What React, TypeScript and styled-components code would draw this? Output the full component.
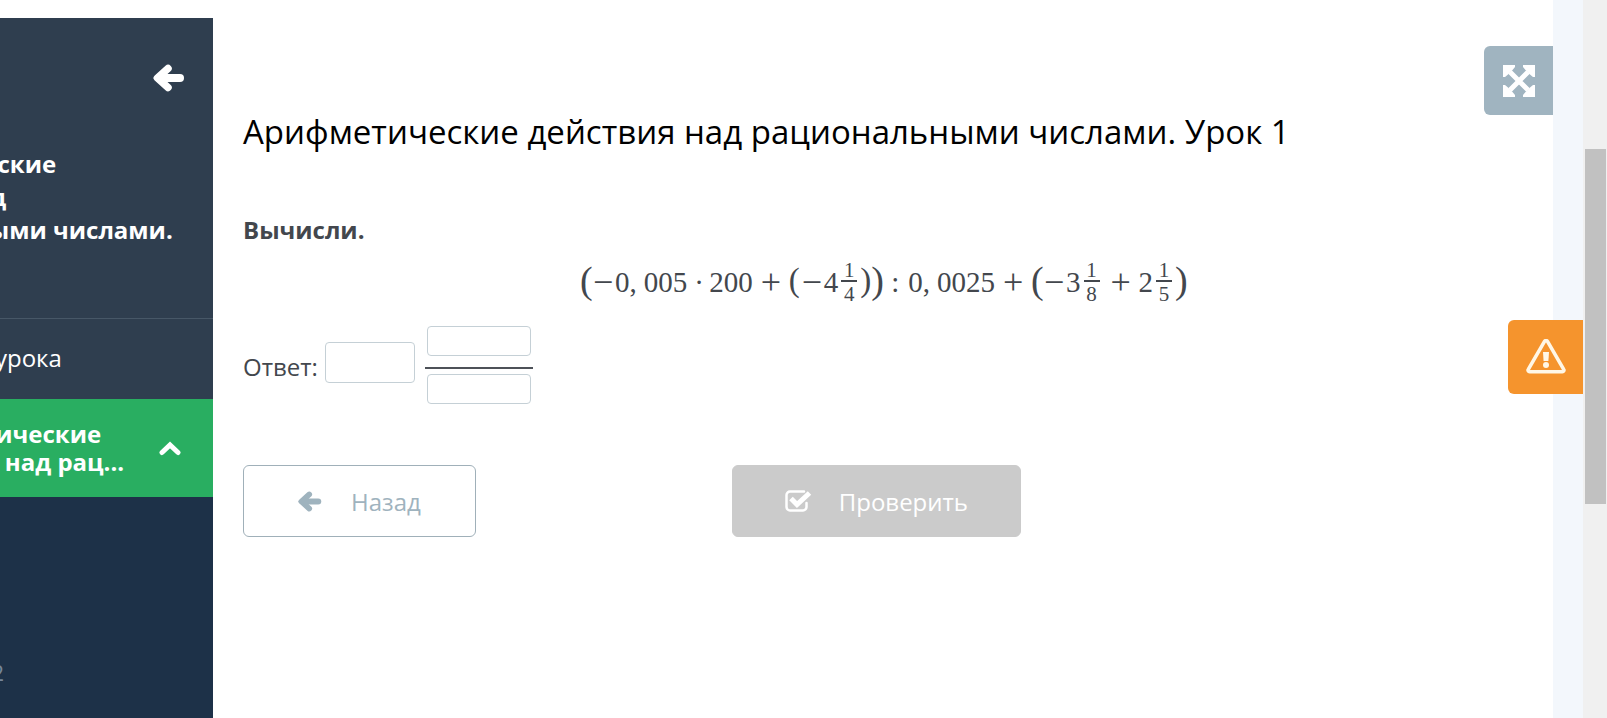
import React from "react";
import styled, { createGlobalStyle } from "styled-components";

const GlobalStyle = createGlobalStyle`
  *, *::before, *::after { box-sizing: border-box; }
  body {
    margin: 0;
    background: #fff;
    color: #43474d;
    font-family: "Open Sans", "Noto Sans", sans-serif;
    font-size: 24px;
  }
  button, input { font: inherit; }
`;

const Page = styled.div`
  position: relative;
  display: flex;
  min-height: 100vh;
  overflow: hidden;
`;

const Sidebar = styled.aside`
  flex: none;
  display: flex;
  justify-content: flex-end;
  width: 213px;
  margin-top: 18px;
  overflow: hidden;
  background: #1d3148;
  color: #fff;
`;

const SidebarInner = styled.div`
  flex: none;
  display: flex;
  flex-direction: column;
  width: 379px;
`;

const SidebarHead = styled.div`
  display: flex;
  flex-direction: column;
  align-items: flex-start;
  height: 301px;
  padding: 46px 28px 0 0;
  background: #2f3e4f;
  border-bottom: 1px solid #475767;
`;

const IconButton = styled.button`
  align-self: flex-end;
  display: flex;
  padding: 0;
  border: 0;
  background: none;
  color: inherit;
`;

const CourseTitle = styled.h2`
  margin: 55px 0 0;
  font-size: 24px;
  line-height: 33px;
  font-weight: 700;
  white-space: nowrap;
`;

const PlanLink = styled.a`
  display: flex;
  align-items: center;
  height: 80px;
  padding: 0 0 4px 95px;
  background: #2f3e4f;
  color: #fff;
  text-decoration: none;
`;

const CurrentLesson = styled.button`
  display: flex;
  align-items: center;
  justify-content: space-between;
  height: 98px;
  padding: 0 32px 0 45px;
  border: 0;
  background: #29ae61;
  color: #fff;
  font-weight: 700;
  line-height: 28px;
  text-align: left;
`;

const Version = styled.div`
  margin-top: auto;
  padding: 0 209px 30px 0;
  color: #76869a;
  font-size: 22px;
  line-height: 32px;
  text-align: right;
`;

const Main = styled.main`
  flex: 1;
  min-width: 0;
  padding: 110px 30px 0;
`;

const Title = styled.h1`
  margin: 0;
  color: #000;
  font-size: 33px;
  line-height: 44px;
  font-weight: 400;
`;

const Task = styled.p`
  margin: 59px 0 0;
  font-weight: 700;
  line-height: 34px;
`;

const Formula = styled.div`
  display: flex;
  align-items: center;
  justify-content: center;
  height: 48px;
  margin-top: 11px;
  font-family: "Liberation Serif", serif;
  font-size: 29px;
  line-height: 1;
`;

const Comma = styled.span`
  margin-right: 7px;
`;

const Operator = styled.span<{ $gap?: number }>`
  width: 20px;
  margin: 0 ${(p) => p.$gap ?? 8}px;
  font-size: 36px;
  text-align: center;
`;

const Mark = styled.span<{ $gap: number }>`
  width: 8px;
  margin: 0 ${(p) => p.$gap}px;
  text-align: center;
`;

const Paren = styled.span<{ $large?: boolean }>`
  width: 11px;
  padding-bottom: 4px;
  font-size: ${(p) => (p.$large ? 38 : 33)}px;
  text-align: center;
`;

const Fraction = styled.span`
  display: flex;
  flex-direction: column;
  align-items: center;
  width: 16px;
  margin: 0 3px;
  font-size: 21px;
  line-height: 20px;
`;

const Numerator = styled.span`
  width: 100%;
  border-bottom: 2px solid #43474d;
  text-align: center;
`;

const Denominator = styled.span`
  padding-top: 2px;
`;

const AnswerRow = styled.div`
  display: flex;
  align-items: center;
  margin-top: 20px;
`;

const AnswerLabel = styled.label`
  padding-top: 4px;
  line-height: 34px;
`;

const AnswerInput = styled.input<{ $small?: boolean }>`
  display: block;
  width: ${(p) => (p.$small ? 104 : 90)}px;
  height: ${(p) => (p.$small ? 30 : 41)}px;
  padding: 0 8px;
  border: 1px solid #c5d0d6;
  border-radius: 4px;
  background: #fff;
  color: inherit;
`;

const WholeSlot = styled.div`
  margin: 0 10px 5px 7px;
`;

const AnswerFraction = styled.div`
  display: flex;
  flex-direction: column;
  align-items: center;
  width: 108px;
`;

const FractionBar = styled.div`
  width: 100%;
  height: 2px;
  margin: 11px 0 5px;
  background: #4d5158;
`;

const Actions = styled.div`
  display: flex;
  column-gap: 20%;
  margin-top: 61px;
`;

const ActionButton = styled.button<{ $filled?: boolean }>`
  display: flex;
  align-items: center;
  height: 72px;
  padding: 0 ${(p) => (p.$filled ? 52 : 54)}px;
  gap: ${(p) => (p.$filled ? 27 : 29)}px;
  border: 1px solid ${(p) => (p.$filled ? "#cbcbcb" : "#a0b0b9")};
  border-radius: 6px;
  background: ${(p) => (p.$filled ? "#cbcbcb" : "#fff")};
  color: ${(p) => (p.$filled ? "#fff" : "#9fb3be")};
  svg { flex: none; }
`;

const Gutter = styled.div`
  flex: none;
  width: 30px;
  background: #f3f7fc;
`;

const ScrollTrack = styled.div`
  flex: none;
  width: 24px;
  padding: 149px 1px 0 2px;
  background: #f0f0f0;
`;

const ScrollThumb = styled.div`
  height: 355px;
  background: #c1c1c1;
`;

const CornerButton = styled.button<{ $warn?: boolean }>`
  position: absolute;
  top: ${(p) => (p.$warn ? 320 : 46)}px;
  right: ${(p) => (p.$warn ? 24 : 54)}px;
  display: flex;
  align-items: center;
  justify-content: center;
  width: ${(p) => (p.$warn ? 75 : 69)}px;
  height: ${(p) => (p.$warn ? 74 : 69)}px;
  padding: 0;
  border: 0;
  border-radius: 6px 0 0 6px;
  background: ${(p) => (p.$warn ? "#f5942d" : "#a0b4c0")};
  color: #fff;
`;

const ArrowIcon = ({ width }: { width: number }) => (
  <svg width={width} height={Math.round(width * 0.875)} viewBox="0 0 32 28" fill="none" stroke="currentColor" strokeLinecap="round" strokeLinejoin="round" aria-hidden="true">
    <path d="M15 4.500 4.500 14 15 23.500" strokeWidth="7.500" />
    <path d="M6 14h21" strokeWidth="8" />
    <path d="M1.500 14 13 5v18z" fill="currentColor" strokeWidth="2" />
  </svg>
);

const ChevronIcon = () => (
  <svg width="22" height="15" viewBox="0 0 22 15" fill="none" stroke="currentColor" strokeWidth="5" strokeLinejoin="miter" strokeLinecap="round" aria-hidden="true">
    <path d="M3 11.500 11 4l8 7.500" />
  </svg>
);

const CheckIcon = () => (
  <svg width="27" height="22" viewBox="0 0 27 22" fill="none" stroke="currentColor" aria-hidden="true">
    <path d="M19 1.500H5A3.500 3.500 0 0 0 1.500 5v12A3.500 3.500 0 0 0 5 20.500h13a3.500 3.500 0 0 0 3.500-3.500v-4" strokeWidth="2.500" strokeLinecap="round" />
    <path d="m6 8.500 6 6L24.500 3" strokeWidth="5" />
  </svg>
);

const ExpandIcon = () => (
  <svg width="32" height="32" viewBox="0 0 32 32" fill="currentColor" aria-hidden="true">
    <path d="M7 7l18 18M25 7 7 25" stroke="currentColor" strokeWidth="5" />
    <path d="M0 0h12v2L9.500 5 5 9.500 2 12H0zM32 0H20v2l2.500 3L27 9.500l3 2.500h2zM0 32h12v-2l-2.500-3L5 22.500 2 20H0zM32 32H20v-2l2.500-3 4.500-4.500 3-2.500h2z" />
  </svg>
);

const WarningIcon = () => (
  <svg width="40" height="36" viewBox="0 0 40 36" fill="none" aria-hidden="true">
    <path d="M18.500 2.400a1.800 1.800 0 0 1 3 0l16.200 28a1.500 1.500 0 0 1-1.300 2.300H3.600a1.500 1.500 0 0 1-1.300-2.300z" stroke="#fff7e6" strokeWidth="3.600" />
    <path d="M17 13h6l-.6 9h-4.800z" fill="#fff7e6" />
    <circle cx="20" cy="26" r="3" fill="#fff7e6" />
  </svg>
);

const Frac = ({ top, bottom }: { top: number; bottom: number }) => (
  <Fraction>
    <Numerator>{top}</Numerator>
    <Denominator>{bottom}</Denominator>
  </Fraction>
);

export default function App() {
  return (
    <>
      <GlobalStyle />
      <Page>
        <Sidebar>
          <SidebarInner>
            <SidebarHead>
              <IconButton type="button" aria-label="Свернуть меню">
                <ArrowIcon width={32} />
              </IconButton>
              <CourseTitle>
                Арифметические<br />
                действия над<br />
                рациональными числами.
              </CourseTitle>
            </SidebarHead>
            <PlanLink href="#plan">План урока</PlanLink>
            <CurrentLesson type="button">
              <span>
                Арифметические<br />
                действия над рац...
              </span>
              <ChevronIcon />
            </CurrentLesson>
            <Version>2</Version>
          </SidebarInner>
        </Sidebar>
        <Main>
          <Title>Арифметические действия над рациональными числами. Урок 1</Title>
          <Task>Вычисли.</Task>
          <Formula>
            <Paren $large>(</Paren>
            <Operator $gap={2}>−</Operator>
            <span>0</span><Comma>,</Comma><span>005</span>
            <Mark $gap={7}>·</Mark>
            <span>200</span>
            <Operator>+</Operator>
            <Paren>(</Paren>
            <Operator $gap={2}>−</Operator>
            <span>4</span>
            <Frac top={1} bottom={4} />
            <Paren>)</Paren>
            <Paren $large>)</Paren>
            <Mark $gap={9}>:</Mark>
            <span>0</span><Comma>,</Comma><span>0025</span>
            <Operator>+</Operator>
            <Paren $large>(</Paren>
            <Operator $gap={2}>−</Operator>
            <span>3</span>
            <Frac top={1} bottom={8} />
            <Operator>+</Operator>
            <span>2</span>
            <Frac top={1} bottom={5} />
            <Paren $large>)</Paren>
          </Formula>
          <AnswerRow>
            <AnswerLabel htmlFor="whole">Ответ:</AnswerLabel>
            <WholeSlot>
              <AnswerInput id="whole" type="text" />
            </WholeSlot>
            <AnswerFraction>
              <AnswerInput $small type="text" aria-label="Числитель" />
              <FractionBar />
              <AnswerInput $small type="text" aria-label="Знаменатель" />
            </AnswerFraction>
          </AnswerRow>
          <Actions>
            <ActionButton type="button">
              <ArrowIcon width={24} />
              Назад
            </ActionButton>
            <ActionButton type="button" $filled>
              <CheckIcon />
              Проверить
            </ActionButton>
          </Actions>
        </Main>
        <Gutter />
        <ScrollTrack>
          <ScrollThumb />
        </ScrollTrack>
        <CornerButton type="button" aria-label="На весь экран">
          <ExpandIcon />
        </CornerButton>
        <CornerButton type="button" $warn aria-label="Сообщить об ошибке">
          <WarningIcon />
        </CornerButton>
      </Page>
    </>
  );
}
